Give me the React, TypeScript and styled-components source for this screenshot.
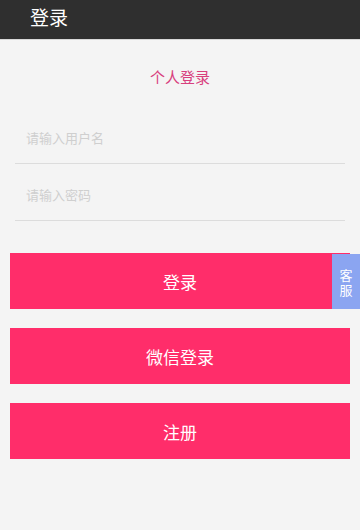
import React from 'react';
import styled, { createGlobalStyle } from 'styled-components';

const GlobalStyle = createGlobalStyle`
  html, body {
    margin: 0;
    padding: 0;
    background: #f4f4f4;
    font-family: "Noto Sans CJK SC", "Noto Sans", sans-serif;
  }
  * {
    box-sizing: border-box;
  }
`;

const Root = styled.div`
  position: relative;
  width: 360px;
  min-height: 530px;
  background: #f4f4f4;
`;

const Header = styled.header`
  height: 40px;
  background: #2f2f2f;
  display: flex;
  align-items: center;
  padding: 0 0 7px 30px;
  border-bottom: 1px solid #d8d8d8;
`;

const HeaderTitle = styled.h1`
  margin: 0;
  font-size: 19px;
  font-weight: 400;
  color: #ffffff;
  line-height: 1;
`;

const SubTitle = styled.div`
  text-align: center;
  margin-top: 26px;
  font-size: 15px;
  color: #d8407e;
  line-height: 22px;
`;

const Form = styled.div`
  padding: 0 15px;
  margin-top: 19px;
  display: flex;
  flex-direction: column;
`;

const Input = styled.input`
  display: block;
  height: 57px;
  margin: 0;
  padding: 5px 11px 0;
  border: none;
  border-bottom: 1px solid #dcdcdc;
  background: transparent;
  font-family: inherit;
  font-size: 13px;
  outline: none;
  color: #333;

  &::placeholder {
    color: #cfcfcf;
  }
`;

const Buttons = styled.div`
  margin-top: 32px;
  padding: 0 10px;
  display: flex;
  flex-direction: column;
  gap: 19px;
`;

const Button = styled.button`
  height: 56px;
  border: none;
  background: #ff2d6a;
  color: #ffffff;
  font-family: inherit;
  font-size: 17px;
  font-weight: 400;
  cursor: pointer;
`;

const ServiceTab = styled.div`
  position: absolute;
  right: 0;
  top: 254px;
  width: 28px;
  height: 55px;
  background: #8ba5f1;
  color: #ffffff;
  font-size: 13px;
  line-height: 15px;
  display: flex;
  flex-direction: column;
  align-items: center;
  justify-content: center;
`;

function App() {
  return (
    <Root>
      <GlobalStyle />
      <Header>
        <HeaderTitle>登录</HeaderTitle>
      </Header>
      <SubTitle>个人登录</SubTitle>
      <Form>
        <Input placeholder="请输入用户名" />
        <Input type="password" placeholder="请输入密码" />
      </Form>
      <Buttons>
        <Button>登录</Button>
        <Button>微信登录</Button>
        <Button>注册</Button>
      </Buttons>
      <ServiceTab>
        <span>客</span>
        <span>服</span>
      </ServiceTab>
    </Root>
  );
}

export default App;
